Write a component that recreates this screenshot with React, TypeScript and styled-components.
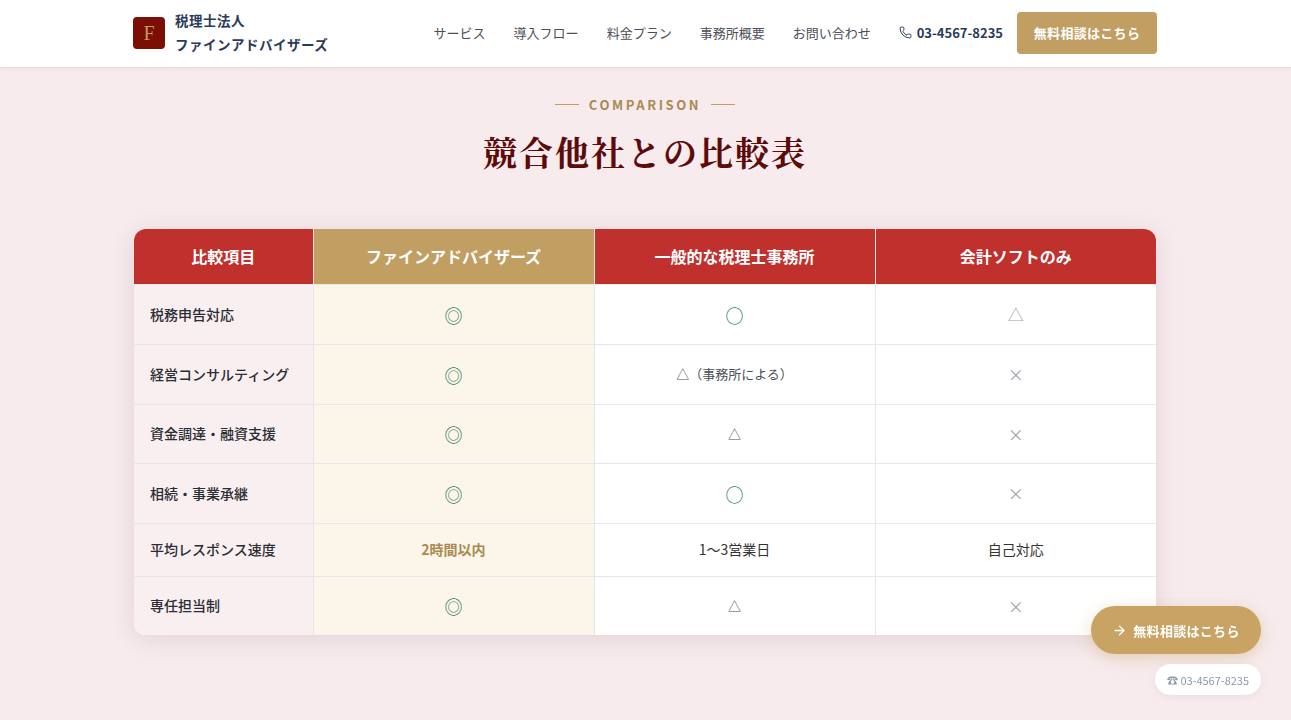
import React from 'react';
import styled, { createGlobalStyle } from 'styled-components';
import { Phone, ArrowRight } from 'lucide-react';

const GlobalStyle = createGlobalStyle`
  html, body {
    margin: 0;
    height: 100%;
    overflow: hidden;
    background: #f7ebed;
    font-family: "Noto Sans CJK JP", "Noto Sans", sans-serif;
  }
  body {
    padding-right: 1px;
  }
  * { box-sizing: border-box; }
`;

const Header = styled.header`
  height: 68px;
  margin-right: -1px;
  padding-right: 1px;
  background: #ffffff;
  border-bottom: 1px solid #e2dfe1;
  box-shadow: 0 1px 4px rgba(0, 0, 0, 0.05);
`;

const HeaderInner = styled.div`
  width: 1024px;
  height: 66px;
  margin: 0 auto;
  display: flex;
  align-items: center;
  justify-content: space-between;
`;

const Brand = styled.div`
  display: flex;
  align-items: center;
  gap: 10px;
`;

const LogoMark = styled.div`
  width: 32px;
  height: 32px;
  border-radius: 4px;
  background: #7b0f06;
  color: #c49a5f;
  display: flex;
  align-items: center;
  justify-content: center;
  font-family: "Liberation Serif", serif;
  font-size: 20px;
  font-weight: 400;
`;

const BrandName = styled.div`
  color: #2a3a5a;
  font-size: 13.5px;
  font-weight: 700;
  line-height: 24px;
  letter-spacing: 0.5px;
  padding-bottom: 2px;
`;

const Nav = styled.nav`
  display: flex;
  align-items: center;
`;

const NavLink = styled.a`
  color: #4b5058;
  font-size: 13px;
  margin-right: 28px;
  padding-bottom: 2px;
`;

const PhoneLink = styled.a`
  display: flex;
  align-items: center;
  gap: 5px;
  color: #2a3a5a;
  font-size: 13px;
  font-weight: 700;
  margin-right: 14px;
  padding-bottom: 1px;
`;

const HeaderButton = styled.a`
  width: 140px;
  height: 42px;
  padding-bottom: 2px;
  border-radius: 4px;
  background: #c19e62;
  color: #ffffff;
  font-size: 13px;
  font-weight: 700;
  letter-spacing: 0.3px;
  display: flex;
  align-items: center;
  justify-content: center;
`;

const Section = styled.section`
  width: 1024px;
  margin: 0 auto;
  padding-top: 27px;
`;

const Eyebrow = styled.div`
  display: flex;
  align-items: center;
  justify-content: center;
  gap: 10px;
  height: 18px;
  color: #a98a52;
  font-size: 13px;
  font-weight: 700;
  letter-spacing: 2.6px;

  &::before,
  &::after {
    content: '';
    width: 24px;
    height: 1px;
    background: #c19e62;
  }
`;

const Title = styled.h2`
  margin: 14px 0 0;
  height: 50px;
  text-align: center;
  color: #5c0a0a;
  font-family: "Noto Serif CJK JP", "Noto Serif JP", serif;
  font-size: 34px;
  font-weight: 700;
  line-height: 50px;
  letter-spacing: 2px;
`;

const TableCard = styled.div`
  margin: 52px 0 0 1px;
  width: 1022px;
  border-radius: 12px;
  overflow: hidden;
  background: #ffffff;
  box-shadow: 0 4px 24px rgba(90, 40, 50, 0.12);
`;

const Table = styled.table`
  width: 100%;
  border-collapse: collapse;
  table-layout: fixed;
`;

const HeadCell = styled.th<{ $gold?: boolean; $width?: number }>`
  height: 55px;
  padding: 0;
  width: ${(p) => (p.$width ? `${p.$width}px` : 'auto')};
  background: ${(p) => (p.$gold ? '#c19e62' : '#c0302c')};
  color: #ffffff;
  font-size: 16px;
  font-weight: 700;
  border-left: 1px solid #f3e4e4;

  &:first-child {
    border-left: 0;
  }
`;

const Row = styled.tr<{ $height: number }>`
  height: ${(p) => p.$height}px;
`;

const LabelCell = styled.td`
  padding: 0 16px 1px;
  background: #f9eff0;
  color: #2a2d34;
  font-size: 14px;
  font-weight: 500;
  border-top: 1px solid #e6e7eb;
`;

const Cell = styled.td<{ $highlight?: boolean }>`
  padding: 0 0 2px;
  text-align: center;
  color: #333333;
  font-size: 14px;
  background: ${(p) => (p.$highlight ? '#fcf5e9' : '#ffffff')};
  border-top: 1px solid #e6e7eb;
  border-left: 1px solid #e3e7ea;
`;

const Mark = styled.span<{ $color: string; $size: number; $top: number }>`
  display: inline-block;
  position: relative;
  top: ${(p) => p.$top}px;
  color: ${(p) => p.$color};
  font-size: ${(p) => p.$size}px;
  line-height: 1;
`;

const SmallNote = styled.span`
  color: #4b5058;
  font-size: 13px;
`;

const Strong = styled.span`
  color: #a98a52;
  font-weight: 700;
`;

const FloatStack = styled.div`
  position: fixed;
  right: 30px;
  bottom: 25px;
  display: flex;
  flex-direction: column;
  align-items: flex-end;
  gap: 10px;
`;

const FloatButton = styled.a`
  width: 170px;
  height: 48px;
  border-radius: 24px;
  background: #c8a364;
  color: #ffffff;
  font-size: 13px;
  font-weight: 700;
  letter-spacing: 0.3px;
  display: flex;
  align-items: center;
  justify-content: center;
  gap: 6px;
  box-shadow: 0 4px 16px rgba(200, 163, 100, 0.4);
`;

const FloatPhone = styled.a`
  width: 106px;
  height: 31px;
  border-radius: 16px;
  background: #ffffff;
  color: #8a98ad;
  font-size: 11px;
  display: flex;
  align-items: center;
  justify-content: center;
  box-shadow: 0 2px 8px rgba(0, 0, 0, 0.06);
`;

const rows: { label: string; height: number; values: [string, string, string] }[] = [
  { label: '税務申告対応', height: 60, values: ['◎', '○', '△'] },
  { label: '経営コンサルティング', height: 60, values: ['◎', '△（事務所による）', '×'] },
  { label: '資金調達・融資支援', height: 59, values: ['◎', '△', '×'] },
  { label: '相続・事業承継', height: 60, values: ['◎', '○', '×'] },
  { label: '平均レスポンス速度', height: 53, values: ['2時間以内', '1〜3営業日', '自己対応'] },
  { label: '専任担当制', height: 59, values: ['◎', '△', '×'] },
];

const renderValue = (value: string, index: number) => {
  if (value === '◎' || value === '○') return <Mark $color="#2f7d5a" $size={18} $top={3}>{value}</Mark>;
  if (value === '×') return <Mark $color="#9ca3af" $size={16} $top={2}>{value}</Mark>;
  if (value === '△' && index === 2) return <Mark $color="#9ca3af" $size={16} $top={2}>{value}</Mark>;
  if (value.startsWith('△')) return <SmallNote>{value}</SmallNote>;
  if (index === 0) return <Strong>{value}</Strong>;
  return value;
};

const App: React.FC = () => {
  const navItems = ['サービス', '導入フロー', '料金プラン', '事務所概要', 'お問い合わせ'];

  return (
    <>
      <GlobalStyle />
      <Header>
        <HeaderInner>
          <Brand>
            <LogoMark>F</LogoMark>
            <BrandName>
              税理士法人
              <br />
              ファインアドバイザーズ
            </BrandName>
          </Brand>
          <Nav>
            {navItems.map((item) => (
              <NavLink key={item}>{item}</NavLink>
            ))}
            <PhoneLink>
              <Phone size={13} strokeWidth={1.8} />
              03-4567-8235
            </PhoneLink>
            <HeaderButton>無料相談はこちら</HeaderButton>
          </Nav>
        </HeaderInner>
      </Header>

      <Section>
        <Eyebrow>COMPARISON</Eyebrow>
        <Title>競合他社との比較表</Title>
        <TableCard>
          <Table>
            <thead>
              <tr>
                <HeadCell $width={179}>比較項目</HeadCell>
                <HeadCell $gold>ファインアドバイザーズ</HeadCell>
                <HeadCell>一般的な税理士事務所</HeadCell>
                <HeadCell>会計ソフトのみ</HeadCell>
              </tr>
            </thead>
            <tbody>
              {rows.map((row) => (
                <Row key={row.label} $height={row.height}>
                  <LabelCell>{row.label}</LabelCell>
                  {row.values.map((value, index) => (
                    <Cell key={index} $highlight={index === 0}>
                      {renderValue(value, index)}
                    </Cell>
                  ))}
                </Row>
              ))}
            </tbody>
          </Table>
        </TableCard>
      </Section>

      <FloatStack>
        <FloatButton>
          <ArrowRight size={15} strokeWidth={2.2} />
          無料相談はこちら
        </FloatButton>
        <FloatPhone>☎ 03-4567-8235</FloatPhone>
      </FloatStack>
    </>
  );
};

export default App;
